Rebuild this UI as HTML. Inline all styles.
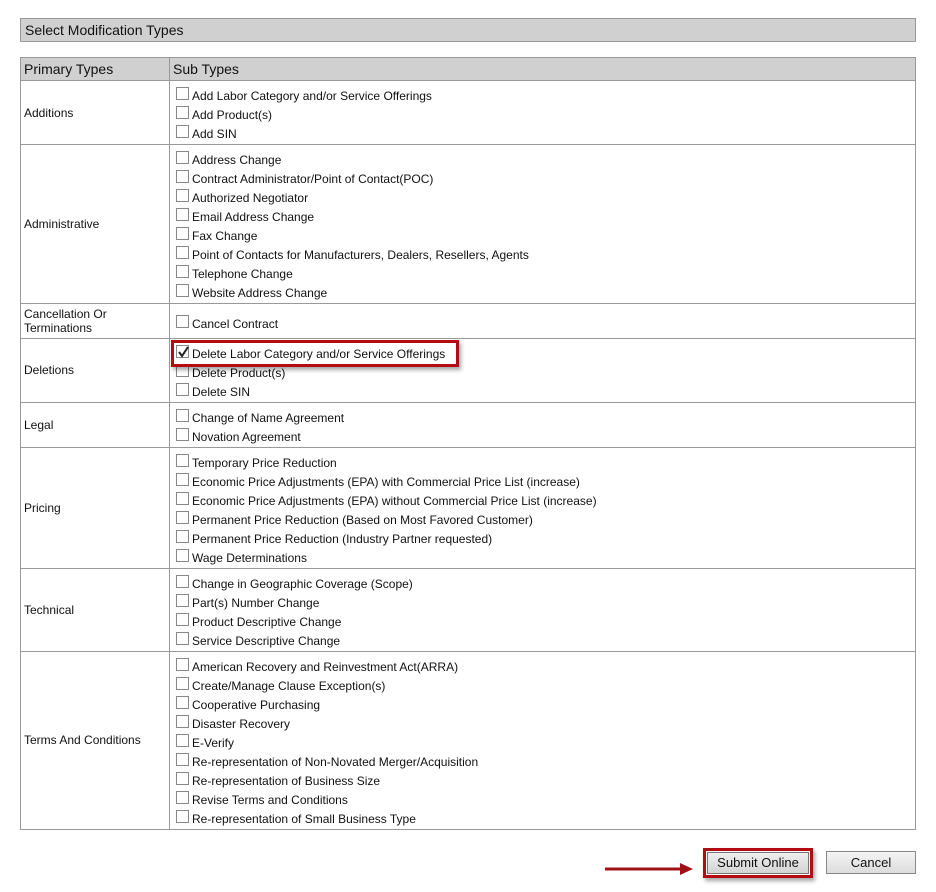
<!DOCTYPE html>
<html><head><meta charset="utf-8"><style>
body{margin:0;width:936px;height:892px;background:#fff;position:relative;font-family:"Liberation Sans",Arial,sans-serif;color:#111;overflow:hidden}
div{position:absolute;box-sizing:border-box}
.bar{left:20px;top:18px;width:896px;height:24px;background:#d0d0d0;border:1px solid #999;font-size:14px;line-height:22px;padding-left:4px}
.tbl{left:20px;top:57px;width:896px;height:773px;border:1px solid #999}
.hd{left:20px;top:57px;width:896px;height:24px;background:#d0d0d0;border:1px solid #999}
.h{font-size:14px;top:61px}
.vl{left:169px;top:57px;width:1px;height:773px;background:#999}
.hl{left:20px;width:896px;height:1px;background:#999}
.p{left:24px;font-size:12px;line-height:14px}
.cb{left:176px;width:13px;height:13px;border:1px solid #888;background:#fff}
.t{left:192px;font-size:12px;line-height:14px;white-space:nowrap}
</style></head><body>
<div class="bar">Select Modification Types</div>
<div class="tbl"></div>
<div class="hd"></div>
<div class="h" style="left:24px">Primary Types</div>
<div class="h" style="left:173px">Sub Types</div>
<div class="vl"></div>
<div class="hl" style="top:144px"></div>
<div class="hl" style="top:303px"></div>
<div class="hl" style="top:338px"></div>
<div class="hl" style="top:402px"></div>
<div class="hl" style="top:447px"></div>
<div class="hl" style="top:568px"></div>
<div class="hl" style="top:651px"></div>
<div class="p" style="top:106px">Additions</div>
<div class="p" style="top:217px">Administrative</div>
<div class="p" style="top:307px">Cancellation Or<br>Terminations</div>
<div class="p" style="top:363px">Deletions</div>
<div class="p" style="top:418px">Legal</div>
<div class="p" style="top:501px">Pricing</div>
<div class="p" style="top:603px">Technical</div>
<div class="p" style="top:733px">Terms And Conditions</div>
<div id="items"></div>
<script>
var L=[[95,"Add Labor Category and/or Service Offerings"],[114,"Add Product(s)"],[133,"Add SIN"],
[159,"Address Change"],[178,"Contract Administrator/Point of Contact(POC)"],[197,"Authorized Negotiator"],[216,"Email Address Change"],[235,"Fax Change"],[254,"Point of Contacts for Manufacturers, Dealers, Resellers, Agents"],[273,"Telephone Change"],[292,"Website Address Change"],
[323,"Cancel Contract"],[353,"Delete Labor Category and/or Service Offerings"],[372,"Delete Product(s)"],[391,"Delete SIN"],
[417,"Change of Name Agreement"],[436,"Novation Agreement"],
[462,"Temporary Price Reduction"],[481,"Economic Price Adjustments (EPA) with Commercial Price List (increase)"],[500,"Economic Price Adjustments (EPA) without Commercial Price List (increase)"],[519,"Permanent Price Reduction (Based on Most Favored Customer)"],[538,"Permanent Price Reduction (Industry Partner requested)"],[557,"Wage Determinations"],
[583,"Change in Geographic Coverage (Scope)"],[602,"Part(s) Number Change"],[621,"Product Descriptive Change"],[640,"Service Descriptive Change"],
[666,"American Recovery and Reinvestment Act(ARRA)"],[685,"Create/Manage Clause Exception(s)"],[704,"Cooperative Purchasing"],[723,"Disaster Recovery"],[742,"E-Verify"],[761,"Re-representation of Non-Novated Merger/Acquisition"],[780,"Re-representation of Business Size"],[799,"Revise Terms and Conditions"],[818,"Re-representation of Small Business Type"]];
var h="";L.forEach(function(a){h+='<div class="cb" style="top:'+(a[0]-8)+'px"></div><div class="t" style="top:'+(a[0]-6)+'px">'+a[1]+'</div>';});
document.getElementById("items").outerHTML=h;
</script>
<svg style="position:absolute;left:176px;top:345px" width="14" height="14"><path d="M3 7 L6 11 L12 2" stroke="#222" stroke-width="2" fill="none"/></svg>
<div style="left:171px;top:340px;width:288px;height:27px;border:3px solid #b30a14;box-shadow:2px 3px 4px rgba(0,0,0,.35)"></div>
<svg style="position:absolute;left:600px;top:860px" width="100" height="20"><line x1="5" y1="9" x2="82" y2="9" stroke="#a01018" stroke-width="3"/><path d="M80 3 L93 9 L80 15Z" fill="#a01018"/></svg>
<div style="left:703px;top:848px;width:110px;height:30px;border:3px solid #b30a14;box-shadow:2px 3px 4px rgba(0,0,0,.35)"></div>
<div style="left:707px;top:852px;width:102px;height:22px;border:1px solid #777;background:linear-gradient(#eee,#d4d4d4);font-size:13px;text-align:center;line-height:20px">Submit Online</div>
<div style="left:826px;top:851px;width:90px;height:23px;border:1px solid #888;background:linear-gradient(#f4f4f4,#dcdcdc);font-size:13px;text-align:center;line-height:21px">Cancel</div>
</body></html>
